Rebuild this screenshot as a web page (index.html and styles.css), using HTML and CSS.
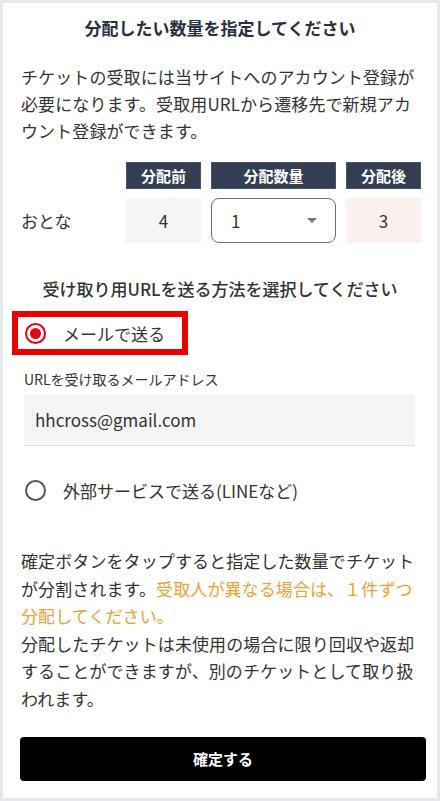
FILE: index.html
```html
<!DOCTYPE html>
<html lang="ja">
<head>
<meta charset="utf-8">
<title>分配</title>
<link rel="stylesheet" href="styles.css">
</head>
<body>
<div class="card">
  <h1 class="title">分配したい数量を指定してください</h1>
  <p class="lead">チケットの受取には当サイトへのアカウント登録が必要になります。受取用URLから遷移先で新規アカウント登録ができます。</p>

  <div class="qty">
    <div></div>
    <div class="th">分配前</div>
    <div class="th">分配数量</div>
    <div class="th">分配後</div>
    <div class="label">おとな</div>
    <div class="cell before">4</div>
    <div class="select"><span>1</span><span class="caret"></span></div>
    <div class="cell after">3</div>
  </div>

  <h2 class="subtitle">受け取り用URLを送る方法を選択してください</h2>

  <div class="radio-row">
    <span class="radio checked"></span>
    <span class="radio-text">メールで送る</span>
    <span class="highlight"></span>
  </div>

  <div class="mail">
    <div class="mail-label">URLを受け取るメールアドレス</div>
    <div class="mail-input">hhcross@gmail.com</div>
  </div>

  <div class="radio-row second">
    <span class="radio"></span>
    <span class="radio-text">外部サービスで送る(LINEなど)</span>
  </div>

  <p class="note">確定ボタンをタップすると指定した数量でチケットが分割されます。<span class="warn">受取人が異なる場合は、１件ずつ分配してください。</span><br>分配したチケットは未使用の場合に限り回収や返却することができますが、別のチケットとして取り扱われます。</p>

  <button class="submit">確定する</button>
</div>
</body>
</html>
```

FILE: styles.css
```css
* { box-sizing: border-box; }
html, body { margin: 0; padding: 0; }
body {
  background: #e6e8ec;
  padding: 3px;
  font-family: "Noto Sans CJK JP", "Noto Sans", sans-serif;
  color: #333;
}
.card {
  background: #fff;
  width: 434px;
  height: 795px;
  padding: 13px 18px 16px;
}
.title {
  margin: 0;
  font-size: 17px;
  line-height: 24px;
  font-weight: 700;
  text-align: center;
  color: #29303f;
}
.lead {
  margin: 23px 0 0;
  font-size: 17px;
  line-height: 27px;
  letter-spacing: 0.1px;
}
.qty {
  margin-top: 18px;
  display: grid;
  grid-template-columns: 95px 75px 125px 75px;
  column-gap: 10px;
  row-gap: 9px;
  grid-template-rows: 27px 45px;
  align-items: stretch;
}
.th {
  background: #343e52;
  color: #fff;
  font-size: 15px;
  font-weight: 700;
  display: flex;
  align-items: center;
  justify-content: center;
  border: 1px solid #4b5466;
}
.label {
  font-size: 17px;
  display: flex;
  align-items: center;
}
.cell {
  display: flex;
  align-items: center;
  justify-content: center;
  font-size: 17px;
}
.before { background: #f5f5f5; }
.after { background: #fdf1ef; }
.select {
  border: 1.5px solid #6f6f6f;
  border-radius: 8px;
  display: flex;
  align-items: center;
  justify-content: space-between;
  padding: 0 18px 0 19px;
  font-size: 17px;
}
.caret {
  width: 0;
  height: 0;
  border-left: 5px solid transparent;
  border-right: 5px solid transparent;
  border-top: 5px solid #777;
}
.subtitle {
  margin: 34px 0 0;
  font-size: 17px;
  line-height: 24px;
  font-weight: 500;
  text-align: center;
  color: #333;
}
.radio-row {
  position: relative;
  margin-top: 10px;
  height: 44px;
  display: flex;
  align-items: center;
  padding-left: 4px;
}
.radio-row.second { margin-top: 22px; }
.radio {
  width: 21px;
  height: 21px;
  border-radius: 50%;
  border: 2px solid #555;
  display: flex;
  align-items: center;
  justify-content: center;
  flex: none;
}
.radio.checked { border-color: #e50012; }
.radio.checked::after {
  content: "";
  width: 11px;
  height: 11px;
  border-radius: 50%;
  background: #e50012;
}
.radio-text {
  margin-left: 17px;
  font-size: 17px;
}
.highlight {
  position: absolute;
  left: -9px;
  top: 0;
  width: 176px;
  height: 44px;
  border: 6px solid #ee0000;
}
.mail {
  margin: 13px 4px 0 3px;
}
.mail-label {
  font-size: 14px;
  line-height: 22px;
}
.mail-input {
  margin-top: 4px;
  height: 52px;
  background: #f5f5f5;
  border-bottom: 1px solid #dedede;
  padding-left: 11px;
  display: flex;
  align-items: center;
  font-size: 17px;
}
.note {
  margin: 35px 0 0;
  font-size: 17px;
  line-height: 27.6px;
  letter-spacing: 0.1px;
}
.warn { color: #f0a032; }
.submit {
  display: block;
  width: 406px;
  margin: 24px 0 0 -1px;
  height: 44px;
  background: #000;
  color: #fff;
  border: 0;
  border-radius: 4px;
  font-family: inherit;
  font-size: 15px;
  font-weight: 700;
}
```
